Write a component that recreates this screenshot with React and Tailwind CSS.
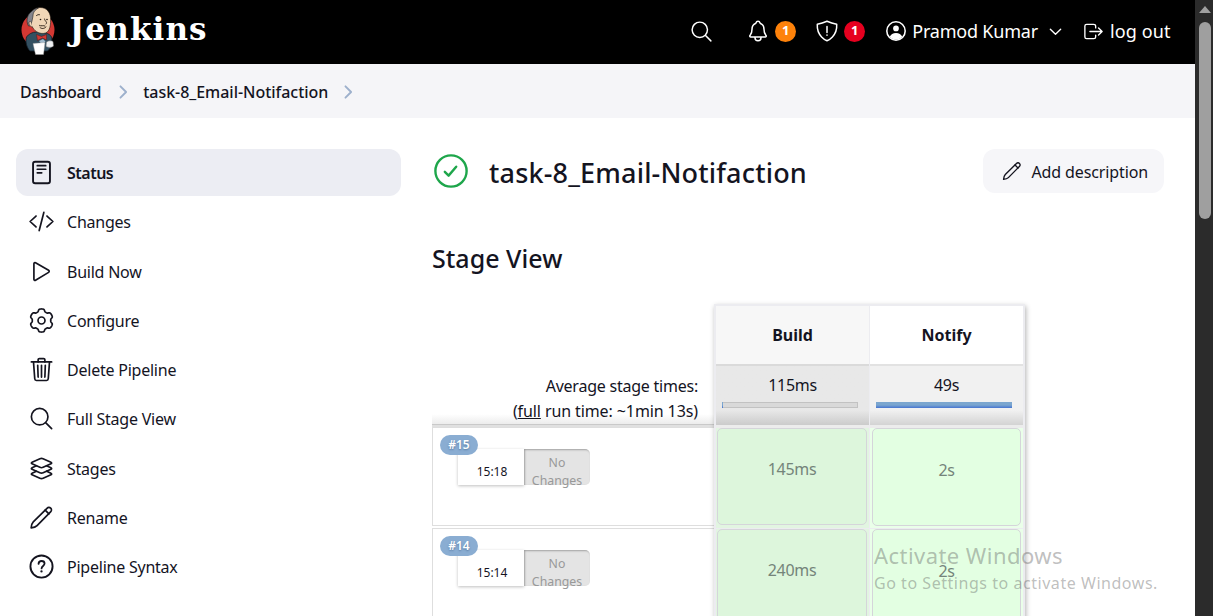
import React from "react";

const gearPath = (() => {
  const pts = [];
  for (let i = 0; i < 144; i++) {
    const a = (i / 144) * Math.PI * 2;
    const r = 196 + 23 * Math.tanh(2.2 * Math.cos(6 * (a - Math.PI / 2)) + 0.5);
    pts.push(`${(256 + r * Math.cos(a)).toFixed(1)} ${(256 + r * Math.sin(a)).toFixed(1)}`);
  }
  return `M${pts.join("L")}Z`;
})();

function Icon({ className, children, w = 32 }) {
  return (
    <svg viewBox="0 0 512 512" className={`shrink-0 ${className}`} fill="none" stroke="currentColor" strokeWidth={w} strokeLinecap="round" strokeLinejoin="round">
      {children}
    </svg>
  );
}

const icons = {
  status: (
    <>
      <rect x="96" y="52" width="320" height="408" rx="40" strokeWidth="36" />
      <path d="M176 126h160M176 194h160M176 262h84" strokeWidth="32" />
    </>
  ),
  code: <path d="M152 360 40 256l112-104M360 360l112-104-112-104M300 84l-88 344" />,
  play: <path d="M112 111v290c0 17.4 17 28.5 31 20.200l247.600-148.400c14.800-8.900 14.800-30.600 0-39.500L143 90.800c-14-8.300-31 2.800-31 20.200z" />,
  gear: (
    <>
      <path d={gearPath} />
      <circle cx="256" cy="256" r="66" />
    </>
  ),
  trash: (
    <>
      <path d="M104 112l24 320c.95 18.490 14.400 32 32 32h192c17.670 0 30.870-13.510 32-32l24-320" />
      <path d="M64 112h384" />
      <path d="M192 112V72a23.930 23.930 0 0 1 24-24h80a23.930 23.930 0 0 1 24 24v40M256 176v224M184 176l8 224M328 176l-8 224" />
    </>
  ),
  search: (
    <>
      <path d="M221.090 64a157.090 157.090 0 1 0 157.090 157.090A157.100 157.100 0 0 0 221.090 64z" />
      <path d="M338.290 338.290 448 448" />
    </>
  ),
  layers: (
    <>
      <path d="M434.800 137.650l-149.360-68.100c-16.190-7.400-42.690-7.400-58.880 0L77.300 137.650c-17.600 8-17.600 21.090 0 29.090l148 67.500c16.890 7.700 44.690 7.700 61.580 0l148-67.500c17.520-8 17.520-21.100-.08-29.090z" />
      <path d="M160 308.520l-82.700 37.110c-17.600 8-17.600 21.100 0 29.100l148 67.500c16.890 7.690 44.690 7.690 61.580 0l148-67.500c17.600-8 17.600-21.100 0-29.100l-79.940-38.470" />
      <path d="M160 204.480l-82.800 37.160c-17.600 8-17.600 21.100 0 29.100l148 67.490c16.890 7.700 44.690 7.700 61.580 0l148-67.490c17.700-8 17.700-21.100.1-29.100L352 204.480" />
    </>
  ),
  pencil: (
    <>
      <path d="M60 452c4-48 14-88 40-114L360 82c22-22 50-22 70-2s20 48-2 70L172 410c-26 26-64 38-112 42z" />
      <path d="M326 116l70 70" />
    </>
  ),
  help: (
    <>
      <circle cx="256" cy="256" r="210" strokeWidth="36" />
      <path d="M200 206c2-34 26-54 58-54 33 0 56 20 56 49 0 47-57 44-57 92" strokeWidth="34" />
      <circle cx="256" cy="350" r="22" fill="currentColor" stroke="none" />
    </>
  ),
};

const menu = [
  ["status", "Status"],
  ["code", "Changes"],
  ["play", "Build Now"],
  ["gear", "Configure"],
  ["trash", "Delete Pipeline"],
  ["search", "Full Stage View"],
  ["layers", "Stages"],
  ["pencil", "Rename"],
  ["help", "Pipeline Syntax"],
];

function Logo() {
  return (
    <svg viewBox="0 0 36 50" className="-mt-[4px] h-[50px] w-9 shrink-0">
      <ellipse cx="18" cy="25" rx="16.500" ry="17" fill="#d33833" />
      <path d="M6.500 32c2-3 6-5 10-5 7 0 13 1 15 5l1 9-5 5H10c-3-3-5-9-3.500-14z" fill="#335061" stroke="#14202a" strokeWidth=".8" />
      <path d="M11 13c0-7 4-10.500 9-10.500 7 0 10 5 10.500 10 .5 7-.5 14-5 15.500-5 1.500-10-1-12.500-5-2-2-3-7-2-10z" fill="#f0d6b7" stroke="#20160f" strokeWidth=".6" />
      <path d="M8.500 21c-3-5-1-12 3-14.500 2-2 4-3.500 7-3.500-4 2-5.500 5-5.500 8l-1 5-1.500 5z" fill="#84848c" stroke="#222" strokeWidth=".6" />
      <path d="M10.500 16.500c-2.500-.5-2 5 2 5.500" fill="#f0d6b7" stroke="#20160f" strokeWidth=".6" />
      <path d="M16.500 10.500c1-.8 2-1 3-.8M24.500 14c.3 2.500 3.500 3 1.500 5M19.500 20.500c1.500 1 4-.5 5.500.5M20 22.500c1.500 1.500 4 1.500 6-.5" fill="none" stroke="#20160f" strokeWidth=".9" strokeLinecap="round" />
      <circle cx="20.500" cy="14.500" r=".8" fill="#20160f" />
      <circle cx="27" cy="14.500" r=".8" fill="#20160f" />
      <path d="M16.500 29.500l5 2 5-2v5.500l-4-2-5 2.500z" fill="#d33833" stroke="#5d1512" strokeWidth=".5" />
      <path d="M19 36l4-2 2.500 2.500-3.500 3z" fill="#9fb9cc" />
      <path d="M13 38.500l12-1-1.500 12h-8z" fill="#fff" stroke="#999" strokeWidth=".4" />
      <path d="M26.500 37c2-1.500 5-1.500 6.500-.5l.5 4.500c-2 2-5 1.500-7.500.5z" fill="#eef0f2" stroke="#777" strokeWidth=".5" />
    </svg>
  );
}

function Header() {
  return (
    <header className="flex h-16 shrink-0 items-center bg-black pl-[20px] pr-[24px] text-white">
      <Logo />
      <span className="-mt-[5px] ml-[13.500px] font-['DejaVu_Serif',serif] text-[31px] font-bold tracking-[1.150px]">Jenkins</span>
      <div className="-mt-[2px] ml-auto flex items-center text-[18px]">
        <Icon className="mr-[32px] size-[25px]" w={30}>{icons.search}</Icon>
        <Icon className="size-6" w={32}>
          <path d="M427.680 351.430C402 320 383.870 304 383.870 217.350 383.870 138 343.350 109.730 310 96c-4.430-1.820-8.600-6-9.950-10.550C294.200 65.540 277.800 48 256 48s-38.210 17.550-44 37.470c-1.350 4.600-5.520 8.710-9.950 10.530-33.390 13.750-73.870 41.920-73.870 121.350C128.130 304 110 320 84.320 351.430 73.680 364.450 83 384 101.610 384h308.880c18.510 0 27.770-19.610 17.190-32.570zM320 384v16a64 64 0 0 1-128 0v-16" />
        </Icon>
        <span className="ml-[5px] flex size-[21px] items-center justify-center rounded-full bg-[#fe820a] text-[13px] font-bold">1</span>
        <Icon className="ml-[19px] size-6" w={32}>
          <path d="M463.100 112.370C373.680 96.330 336.710 84.450 256 48c-80.710 36.450-117.680 48.330-207.100 64.370C32.700 369.130 240.580 457.790 256 464c15.420-6.210 223.300-94.870 207.100-351.630z" />
          <path d="M256 160v128M256 340v4" />
        </Icon>
        <span className="ml-[5px] flex size-[21px] items-center justify-center rounded-full bg-[#e6001f] text-[13px] font-bold">1</span>
        <Icon className="ml-[20px] size-[22px]" w={36}>
          <circle cx="256" cy="256" r="214" />
          <circle cx="256" cy="196" r="66" fill="currentColor" stroke="none" />
          <path d="M112 392c20-60 76-92 144-92s124 32 144 92c-78 92-212 90-288 0z" fill="currentColor" stroke="none" />
        </Icon>
        <span className="ml-[5px] tracking-[-0.200px]">Pramod Kumar</span>
        <Icon className="ml-[10px] size-[15px]" w={46}>
          <path d="M80 176l176 176 176-176" />
        </Icon>
        <Icon className="ml-[19px] size-[23px]" w={30}>
          <path d="M304 336v40a40 40 0 0 1-40 40H104a40 40 0 0 1-40-40V136a40 40 0 0 1 40-40h152c22.090 0 48 17.910 48 40v40M368 336l80-80-80-80M176 256h256" />
        </Icon>
        <span className="ml-[5px] mr-[0.500px] tracking-[0.100px]">log out</span>
      </div>
    </header>
  );
}

function Chevron({ className }) {
  return (
    <Icon className={`size-[18px] text-[#9db0cc] ${className}`} w={54}>
      <path d="M184 96l160 160-160 160" />
    </Icon>
  );
}

function Sidebar() {
  return (
    <nav className="flex w-[385px] flex-col gap-[2.300px]">
      {menu.map(([icon, label], i) => (
        <div key={label} className={`flex h-[47px] items-center rounded-xl pl-[12px] ${i === 0 ? "bg-[#ecedf3] font-semibold tracking-[-0.500px]" : "tracking-[-0.230px]"}`}>
          <Icon className="size-[27px]">{icons[icon]}</Icon>
          <span className="ml-[12px] pt-px">{label}</span>
        </div>
      ))}
    </nav>
  );
}

function RunRow({ id, time }) {
  return (
    <div className="mb-[2px] h-[99px] border border-r-0 border-[#dedede] bg-white pl-[7px] pt-[7px]">
      <div className="relative z-10 flex h-5 w-[38px] items-center justify-center rounded-full bg-[#8aadd2] text-[12px] font-semibold text-white [text-shadow:0_1px_2px_#5577a0]">{id}</div>
      <div className="-mt-[6px] ml-[18px] flex h-9">
        <div className="flex w-[66px] items-center justify-center bg-white pl-[2px] pt-[9px] text-[12px] shadow-[0_1px_3px_rgba(0,0,0,0.250)]">{time}</div>
        <div className="w-[66px] rounded-r-[5px] bg-[#e4e4e4] pt-[5px] text-center text-[12.300px] leading-[18px] text-[#999] shadow-[inset_1px_1px_2px_rgba(0,0,0,0.300)]">No Changes</div>
      </div>
    </div>
  );
}

function StageColumn({ name, average, percent, runs, alt }) {
  return (
    <div className="flex w-[153px] flex-col">
      <div className={`flex h-[60px] items-center justify-center border-b-2 font-bold ${alt ? "border-[#dadada] bg-[#f7f7f7]" : "border-[#e2e2e2] bg-white"}`}>{name}</div>
      <div className={`flex h-[59px] flex-col items-center bg-linear-to-b pt-[8px] leading-[22px] ${alt ? "from-[#e8e8e8] via-[#e8e8e8] via-75% to-[#cbcbcb]" : "from-[#f1f1f1] via-[#f1f1f1] via-75% to-[#d3d3d3]"}`}>
        <span className="tracking-[-0.300px]">{average}</span>
        <div className="mr-[5px] mt-[6px] h-[6px] w-[136px] border border-[#c2c2c2] bg-[#d9d9d9]">
          <div className="-my-px -ml-px h-[6px] bg-linear-to-b from-[#7ba6cf] from-50% to-[#4774d0]" style={{ width: percent }} />
        </div>
      </div>
      <div className="h-[3px] bg-[#ececec]" />
      {runs.map((run, i) => (
        <div key={i} className={`mb-px h-[100px] ${alt ? "bg-[#e2f5e1] pl-px pr-[2px]" : "bg-[#eaffe9] px-[2px]"}`}>
          <div className={`flex items-center justify-center rounded-[5px] border border-[#d5d5da] pb-[15px] tracking-[-0.300px] text-[#74847a] ${alt ? "h-[97px] bg-[#ddf6dc]" : "h-[98px] bg-[#e3ffe2]"}`}>{run}</div>
        </div>
      ))}
    </div>
  );
}

export default function App() {
  return (
    <div className="relative flex h-[616px] w-[1213px] overflow-hidden bg-white font-['Noto_Sans',sans-serif] text-base text-[#14141f]">
      <div className="flex w-[1195px] flex-col overflow-hidden">
        <Header />
        <div className="flex h-[54px] shrink-0 items-center bg-[#f5f5f8] pl-5 pt-px font-medium">
          <span className="tracking-[-0.300px]">Dashboard</span>
          <Chevron className="ml-[13px] mr-[11px]" />
          <span className="tracking-[-0.030px]">task-8_Email-Notifaction</span>
          <Chevron className="ml-[11px]" />
        </div>
        <div className="flex pl-4 pt-[31px]">
          <Sidebar />
          <main className="ml-[31px] w-[732px]">
            <div className="flex h-[44px] items-center">
              <Icon className="ml-px size-[36px] text-[#1ea64b]" w={34}>
                <circle cx="256" cy="256" r="222" />
                <path d="M168 268l54 54 108-126" />
              </Icon>
              <h1 className="ml-[20px] pt-1 text-[27px] font-medium tracking-[0.180px]">task-8_Email-Notifaction</h1>
              <div className="ml-auto flex h-[44px] items-center rounded-xl bg-[#f6f6f9] px-4">
                <Icon className="ml-[2px] size-[22px]" w={32}>{icons.pencil}</Icon>
                <span className="ml-[8px] pt-px tracking-[-0.120px]">Add description</span>
              </div>
            </div>
            <h2 className="mt-[47px] text-[25px] font-medium leading-9 tracking-[0.020px]">Stage View</h2>
            <div className="mt-[28px] flex items-start">
              <div className="w-[282px] pt-[54px]">
                <div className="h-[67px] border-b border-[#c9c9c9] bg-linear-to-b from-white from-85% to-[#ececec] pr-[16px] pt-[15.500px] text-right leading-[25px] tracking-[-0.230px]">
                  <div>Average stage times:</div>
                  <div className="tracking-[-0.100px]">(<span className="underline">full</span> run time: ~1min 13s)</div>
                </div>
                <div className="h-[2px] bg-[#e0e0e0]" />
                <RunRow id="#15" time="15:18" />
                <RunRow id="#14" time="15:14" />
              </div>
              <div className="flex h-[340px] gap-px border border-t-2 border-[#ececf0] bg-[#ececf0] px-px shadow-[1px_2px_5px_rgba(0,0,0,0.300)]">
                <StageColumn alt name="Build" average="115ms" percent="1px" runs={["145ms", "240ms"]} />
                <StageColumn name="Notify" average="49s" percent="136px" runs={["2s", "2s"]} />
              </div>
            </div>
          </main>
        </div>
      </div>
      <div className="flex w-[18px] flex-col items-center bg-[#2b2b2b] pt-[6px]">
        <svg viewBox="0 0 12 7" className="ml-px h-[7px] w-3 fill-[#a0a0a0]"><path d="M0 7 6 0l6 7z" /></svg>
        <div className="ml-[2px] mt-[9px] h-[197px] w-[12px] rounded-full bg-[#9f9f9f]" />
      </div>
      <div className="absolute left-[874px] top-[539px] z-20 whitespace-nowrap text-[#5a5a5a]/40">
        <div className="text-[22px] leading-8 tracking-[0.450px]">Activate Windows</div>
        <div className="text-[16px] leading-[25px] tracking-[0.540px]">Go to Settings to activate Windows.</div>
      </div>
    </div>
  );
}
